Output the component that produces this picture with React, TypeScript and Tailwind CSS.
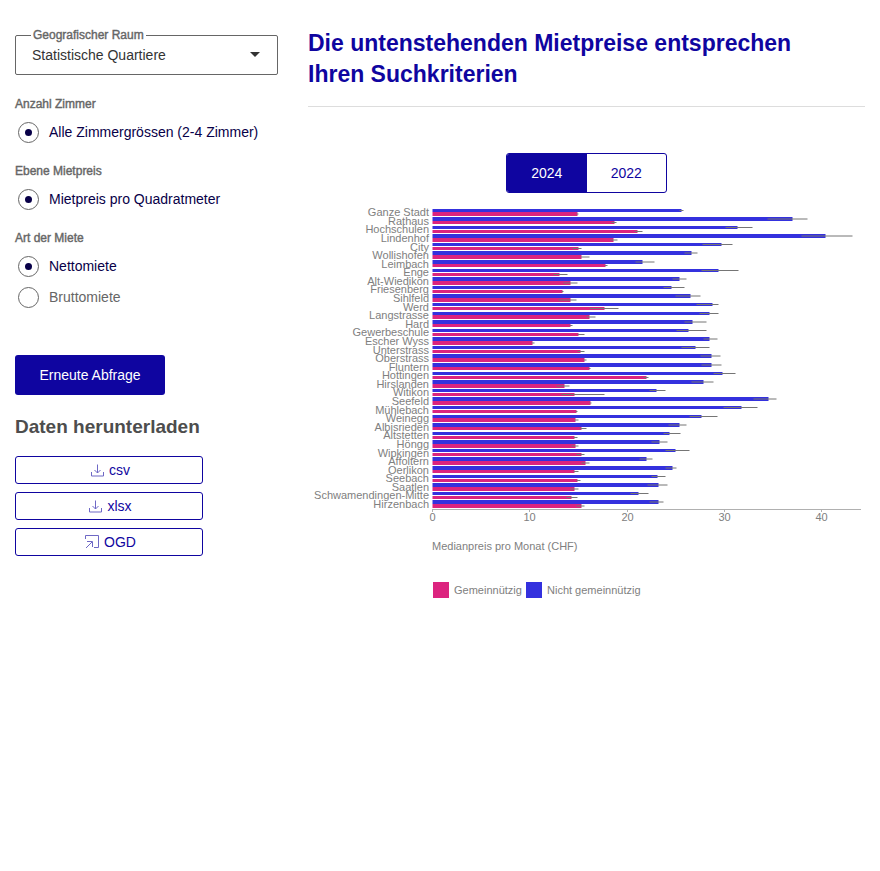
import { useState } from "react";

type Span = [end: number, low: number, high: number];
type District = { name: string; market: Span; nonProfit: Span };

// Bar lengths and confidence limits, in plot units (97.3 units = 10 CHF).
const districts: District[] = [
  { name: "Ganze Stadt", market: [249, 247, 251], nonProfit: [145, 144, 146] },
  { name: "Rathaus", market: [360, 335, 375], nonProfit: [182, 179, 184] },
  { name: "Hochschulen", market: [305, 293, 320], nonProfit: [205, 202, 210] },
  { name: "Lindenhof", market: [393, 369, 420], nonProfit: [181, 178, 185] },
  { name: "City", market: [289, 270, 300], nonProfit: [146, 140, 149] },
  { name: "Wollishofen", market: [259, 252, 265], nonProfit: [149, 148, 157] },
  { name: "Leimbach", market: [210, 203, 222], nonProfit: [173, 172, 175] },
  { name: "Enge", market: [286, 269, 306], nonProfit: [127, 121, 135] },
  { name: "Alt-Wiedikon", market: [247, 240, 254], nonProfit: [138, 131, 145] },
  { name: "Friesenberg", market: [239, 231, 252], nonProfit: [130, 129, 131] },
  { name: "Sihlfeld", market: [258, 243, 268], nonProfit: [138, 126, 144] },
  { name: "Werd", market: [280, 264, 286], nonProfit: [172, 157, 186] },
  { name: "Langstrasse", market: [277, 267, 286], nonProfit: [157, 154, 163] },
  { name: "Hard", market: [260, 252, 274], nonProfit: [138, 137, 140] },
  { name: "Gewerbeschule", market: [256, 244, 274], nonProfit: [146, 145, 152] },
  { name: "Escher Wyss", market: [277, 271, 285], nonProfit: [100, 99, 102] },
  { name: "Unterstrass", market: [263, 249, 277], nonProfit: [148, 145, 152] },
  { name: "Oberstrass", market: [279, 268, 288], nonProfit: [152, 151, 154] },
  { name: "Fluntern", market: [279, 269, 289], nonProfit: [157, 156, 158] },
  { name: "Hottingen", market: [290, 281, 303], nonProfit: [214, 211, 216] },
  { name: "Hirslanden", market: [271, 259, 281], nonProfit: [132, 124, 137] },
  { name: "Witikon", market: [224, 217, 233], nonProfit: [142, 129, 172] },
  { name: "Seefeld", market: [336, 321, 344], nonProfit: [158, 157, 159] },
  { name: "Mühlebach", market: [309, 291, 325], nonProfit: [144, 143, 145] },
  { name: "Weinegg", market: [269, 257, 285], nonProfit: [143, 142, 146] },
  { name: "Albisrieden", market: [247, 236, 254], nonProfit: [149, 147, 154] },
  { name: "Altstetten", market: [237, 231, 248], nonProfit: [142, 141, 145] },
  { name: "Höngg", market: [227, 219, 235], nonProfit: [143, 139, 146] },
  { name: "Wipkingen", market: [243, 233, 257], nonProfit: [149, 144, 152] },
  { name: "Affoltern", market: [214, 207, 220], nonProfit: [153, 149, 157] },
  { name: "Oerlikon", market: [240, 233, 244], nonProfit: [142, 141, 146] },
  { name: "Seebach", market: [225, 219, 233], nonProfit: [145, 144, 148] },
  { name: "Saatlen", market: [226, 215, 235], nonProfit: [142, 138, 146] },
  { name: "Schwamendingen-Mitte", market: [206, 198, 216], nonProfit: [139, 134, 145] },
  { name: "Hirzenbach", market: [226, 217, 231], nonProfit: [149, 144, 152] },
];

const PLOT_X = 124.5;
const PLOT_Y = 16;
const ROW_STEP = 8.584;
const UNITS_PER_TEN = 97.3;

function Bar({ span, top, bottom, color }: { span: Span; top: number; bottom: number; color: string }) {
  const [end, low, high] = span;
  const middle = (top + bottom) / 2;
  return (
    <>
      <rect x={PLOT_X} y={top} width={end} height={bottom - top} fill={color} />
      <line x1={PLOT_X + low} x2={PLOT_X + high} y1={middle} y2={middle} stroke="#757575" />
    </>
  );
}

function RentChart() {
  return (
    <svg
      viewBox="0 0 557 420"
      className="block h-auto w-full font-['Liberation_Sans',Arial,sans-serif] text-[11px]"
      role="img"
      aria-label="Medianpreis pro Monat nach Quartier"
    >
      {districts.map((d, i) => {
        const y = PLOT_Y + i * ROW_STEP;
        return (
          <g key={d.name}>
            <Bar span={d.market} top={Math.floor(y)} bottom={Math.round(y + 3.06)} color="#3431de" />
            <Bar span={d.nonProfit} top={Math.round(y + 3.43)} bottom={Math.round(y + 6.86)} color="#dc247f" />
            <text x={121} y={Math.round(y + 7.2)} textAnchor="end" fill="#808080">
              {d.name}
            </text>
          </g>
        );
      })}
      <line x1={124} x2={553} y1={316.5} y2={316.5} stroke="#b0b0b0" />
      {[0, 10, 20, 30, 40].map((tick) => {
        const x = Math.floor(PLOT_X + (tick / 10) * UNITS_PER_TEN) + 0.5;
        return (
          <g key={tick}>
            <line x1={x} x2={x} y1={316} y2={319} stroke="#b0b0b0" />
            <text x={x} y={328} textAnchor="middle" fill="#808080">
              {tick}
            </text>
          </g>
        );
      })}
      <text x={124} y={357} fill="#808080">Medianpreis pro Monat (CHF)</text>
      <rect x={125} y={389} width={16} height={16} fill="#dc247f" />
      <text x={146} y={401} fill="#808080">Gemeinnützig</text>
      <rect x={218} y={389} width={16} height={16} fill="#3431de" />
      <text x={239} y={401} fill="#808080">Nicht gemeinnützig</text>
    </svg>
  );
}

function RadioGroup({ title, name, options }: { title: string; name: string; options: string[] }) {
  const [value, setValue] = useState(options[0]);
  return (
    <div role="radiogroup" aria-label={title}>
      <div className="mb-[5px] text-[12px] leading-4 text-[#666] [-webkit-text-stroke:0.4px_#666]">{title}</div>
      {options.map((option) => (
        <label
          key={option}
          className="flex h-[31px] items-center gap-[10px] pl-[3px] text-[14px] text-[#666] has-checked:text-[#080048]"
        >
          <input
            type="radio"
            name={name}
            checked={value === option}
            onChange={() => setValue(option)}
            className="grid size-[21px] shrink-0 appearance-none place-content-center rounded-full border border-[#666] before:size-[7px] before:rounded-full checked:before:bg-[#080048]"
          />
          {option}
        </label>
      ))}
    </div>
  );
}

function DownloadIcon() {
  return (
    <svg width="13" height="13" viewBox="0 0 13 13" fill="none" stroke="#0f05a0" strokeWidth="1" opacity="0.6" aria-hidden="true">
      <path d="M6.5 0.5v8.5M3.5 6l3 3 3-3M0.5 8v4h12V8" />
    </svg>
  );
}

function ExternalIcon() {
  return (
    <svg width="14" height="14" viewBox="0 0 14 14" fill="none" stroke="#0f05a0" strokeWidth="1" opacity="0.6" aria-hidden="true">
      <path d="M0.5 4V0.5h13v12H9M1 13l6-6M2 6.5h5.5V12" />
    </svg>
  );
}

function DownloadButton({ label, external }: { label: string; external?: boolean }) {
  return (
    <button
      type="button"
      className="flex h-7 items-center justify-center gap-[5px] rounded-[3px] border border-[#0f05a0] pl-[3px] text-[14px] text-[#0f05a0]"
    >
      {external ? <ExternalIcon /> : <DownloadIcon />}
      {label}
    </button>
  );
}

export default function App() {
  const [year, setYear] = useState("2024");
  return (
    <div className="flex gap-[30px] bg-white px-[15px] font-['Liberation_Sans',Arial,sans-serif]">
      <aside className="w-[263px] shrink-0 pt-[35px]">
        <div className="relative mb-[21px]">
          <label
            htmlFor="area"
            className="absolute -top-2 left-4 bg-white px-[2px] text-[12px] leading-4 text-[#666] [-webkit-text-stroke:0.4px_#666]"
          >
            Geografischer Raum
          </label>
          <select
            id="area"
            className="block h-10 w-full appearance-none rounded-[2px] border border-[#666] bg-white pl-4 text-[14px] text-[#333]"
          >
            <option>Statistische Quartiere</option>
          </select>
          <svg className="pointer-events-none absolute top-[17px] right-[18px]" width="10" height="5" viewBox="0 0 10 5" aria-hidden="true">
            <path d="M0 0h10L5 5z" fill="#333" />
          </svg>
        </div>
        <div className="flex flex-col gap-[15px]">
          <RadioGroup title="Anzahl Zimmer" name="rooms" options={["Alle Zimmergrössen (2-4 Zimmer)"]} />
          <RadioGroup title="Ebene Mietpreis" name="level" options={["Mietpreis pro Quadratmeter"]} />
          <RadioGroup title="Art der Miete" name="kind" options={["Nettomiete", "Bruttomiete"]} />
        </div>
        <button type="button" className="mt-[42px] block h-10 w-[150px] rounded-[3px] bg-[#0f05a0] text-[14px] text-white">
          Erneute Abfrage
        </button>
        <h2 className="mt-[21px] text-[19px] leading-[22px] font-bold text-[#4d4d4d]">Daten herunterladen</h2>
        <div className="mt-[18px] flex w-[188px] flex-col gap-2">
          <DownloadButton label="csv" />
          <DownloadButton label="xlsx" />
          <DownloadButton label="OGD" external />
        </div>
      </aside>
      <main className="min-w-0 flex-1 pt-[28px]">
        <h1 className="border-b border-[#ddd] pb-4 text-[23px] leading-[31px] font-bold text-[#0f05a0]">
          Die untenstehenden Mietpreise entsprechen
          <br />
          Ihren Suchkriterien
        </h1>
        <div className="mx-auto mt-[46px] flex h-10 w-[161px] overflow-hidden rounded-[3px] border border-[#0f05a0] text-[14px]">
          {["2024", "2022"].map((y) => (
            <button
              key={y}
              type="button"
              aria-pressed={year === y}
              onClick={() => setYear(y)}
              className="flex-1 text-[#0f05a0] aria-pressed:bg-[#0f05a0] aria-pressed:text-white"
            >
              {y}
            </button>
          ))}
        </div>
        <RentChart />
      </main>
    </div>
  );
}
